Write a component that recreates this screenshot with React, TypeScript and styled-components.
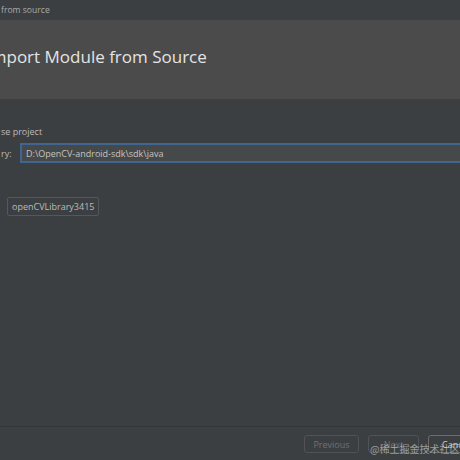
import { createGlobalStyle } from "styled-components";
import styled from "styled-components";

const GlobalStyle = createGlobalStyle`
  html, body {
    margin: 0;
    padding: 0;
    background: #3c3f41;
  }
  * { box-sizing: border-box; }
`;

const Window = styled("div")`
  position: relative;
  width: 460px;
  height: 460px;
  overflow: hidden;
  display: flex;
  flex-direction: column;
  background: #3c3f41;
  font-family: "Open Sans", "Noto Sans", sans-serif;
  color: #bbbbbb;
`;

const TitleBar = styled("div")`
  height: 20px;
  flex: none;
  display: flex;
  align-items: center;
  padding-left: 1px;
  font-size: 8.6px;
  color: #a9abad;
  white-space: nowrap;
`;

const Banner = styled("div")`
  height: 79px;
  flex: none;
  display: flex;
  align-items: center;
  padding-bottom: 6px;
  background: #4b4b4b;
  white-space: nowrap;
`;

const BannerTitle = styled("h1")`
  margin: 0 0 0 -14px;
  font-size: 17px;
  font-weight: 400;
  color: #e4e4e4;
`;

const Body = styled("div")`
  flex: 1;
  display: flex;
  flex-direction: column;
  padding-top: 26px;
`;

const Caption = styled("div")`
  height: 14px;
  line-height: 14px;
  font-size: 9px;
  padding-left: 1px;
  white-space: nowrap;
`;

const FieldRow = styled("div")`
  display: flex;
  align-items: center;
  margin-top: 4px;
  width: calc(100% + 30px);
`;

const FieldLabel = styled("label")`
  width: 20px;
  flex: none;
  font-size: 9px;
  padding-left: 1px;
  white-space: nowrap;
`;

const PathInput = styled("div")`
  flex: 1;
  height: 20px;
  display: flex;
  align-items: center;
  padding-left: 4px;
  border: 2px solid #3f6590;
  background: #45494a;
  font-size: 9px;
  color: #c4c4c4;
  white-space: nowrap;
`;

const ModuleChip = styled("div")`
  align-self: flex-start;
  margin: 34px 0 0 7px;
  height: 19px;
  padding: 0 4px;
  display: flex;
  align-items: center;
  border: 1px solid #55585a;
  border-radius: 2px;
  font-size: 9px;
  color: #bbbbbb;
  white-space: nowrap;
`;

const Footer = styled("div")`
  flex: none;
  border-top: 1px solid #333537;
  padding: 8px 0 7px;
  display: flex;
  justify-content: flex-end;
  gap: 9px;
  margin-right: -24px;
`;

const Button = styled("button")<{ $w: number; $enabled?: boolean }>`
  width: ${(p) => p.$w}px;
  height: 18px;
  padding: 0;
  border-radius: 3px;
  border: 1px solid ${(p) => (p.$enabled ? "#6b6e70" : "#505355")};
  background: #3c3f41;
  font-family: "Open Sans", "Noto Sans", sans-serif;
  font-size: 9px;
  color: ${(p) => (p.$enabled ? "#c6c6c6" : "#6f7173")};
`;

const Watermark = styled("div")`
  position: absolute;
  left: 370px;
  top: 441px;
  font-family: "Noto Sans CJK SC", sans-serif;
  font-size: 10px;
  color: rgba(235, 235, 235, 0.55);
  white-space: nowrap;
  pointer-events: none;
`;

export default function App() {
  return (
    <>
      <GlobalStyle />
      <Window>
        <TitleBar>from source</TitleBar>
        <Banner>
          <BannerTitle>Import Module from Source</BannerTitle>
        </Banner>
        <Body>
          <Caption>se project</Caption>
          <FieldRow>
            <FieldLabel>ry:</FieldLabel>
            <PathInput>D:\OpenCV-android-sdk\sdk\java</PathInput>
          </FieldRow>
          <ModuleChip>openCVLibrary3415</ModuleChip>
        </Body>
        <Footer>
          <Button $w={55}>Previous</Button>
          <Button $w={51}>Next</Button>
          <Button $w={56} $enabled>Cancel</Button>
        </Footer>
        <Watermark>@稀土掘金技术社区</Watermark>
      </Window>
    </>
  );
}
